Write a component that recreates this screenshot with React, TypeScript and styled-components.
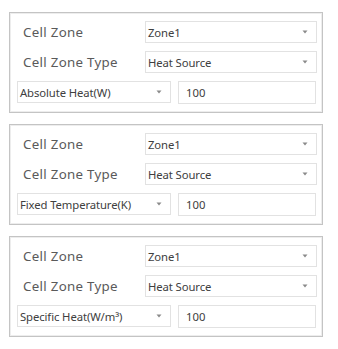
import React from "react";
import styled, { createGlobalStyle } from "styled-components";

type ZoneConfig = {
    zone: string;
    type: string;
    mode: string;
    value: string;
};

const ZONES: ZoneConfig[] = [
    { zone: "Zone1", type: "Heat Source", mode: "Absolute Heat(W)", value: "100" },
    { zone: "Zone1", type: "Heat Source", mode: "Fixed Temperature(K)", value: "100" },
    { zone: "Zone1", type: "Heat Source", mode: "Specific Heat(W/m³)", value: "100" },
];

const Caret = () => (
    <svg width="6" height="4" viewBox="0 0 6 4">
        <path d="M0.5 0.5 L5.5 0.5 L3 3.5 Z" fill="#8a8a8a" />
    </svg>
);

const Combo: React.FC<{ value: string; $width?: number }> = ({ value, $width }) => (
    <ComboBox $width={$width}>
        <ComboText>{value}</ComboText>
        <Caret />
    </ComboBox>
);

const ZonePanel: React.FC<{ config: ZoneConfig }> = ({ config }) => (
    <Panel>
        <Row>
            <Label>Cell Zone</Label>
            <Combo value={config.zone} />
        </Row>
        <Row>
            <Label>Cell Zone Type</Label>
            <Combo value={config.type} />
        </Row>
        <ValueRow>
            <Combo value={config.mode} $width={154} />
            <Input>{config.value}</Input>
        </ValueRow>
    </Panel>
);

export default function App() {
    return (
        <>
            <GlobalStyle />
            <Page>
                {ZONES.map((z, i) => (
                    <ZonePanel key={i} config={z} />
                ))}
            </Page>
        </>
    );
}

/* ------------------- styled-components ------------------- */

const GlobalStyle = createGlobalStyle`
    body {
        margin: 0;
        background: #ffffff;
        font-family: "Noto Sans", "Open Sans", sans-serif;
    }
`;

const Page = styled.div`
    display: flex;
    flex-direction: column;
    gap: 11px;
    padding: 12px 0 0 9px;
    width: 314px;
`;

const Panel = styled.div`
    border: 1px solid #c4c4c4;
    box-shadow: inset 0 0 0 1px #ededed;
    display: flex;
    flex-direction: column;
    gap: 8px;
    padding: 8px 5px 7px 6px;
    height: 101px;
    box-sizing: border-box;
`;

const Row = styled.div`
    display: flex;
    align-items: center;
    padding-left: 7px;
`;

const Label = styled.div`
    width: 122px;
    flex-shrink: 0;
    font-size: 13.3px;
    color: #5a5a5a;
    letter-spacing: 0.3px;
`;

const ComboBox = styled.div<{ $width?: number }>`
    display: flex;
    align-items: center;
    justify-content: space-between;
    box-sizing: border-box;
    height: 22px;
    flex: ${({ $width }) => ($width ? `0 0 ${$width}px` : "1")};
    border: 1px solid #e2e2e2;
    background: #ffffff;
    padding: 0 8px 0 2px;
`;

const ComboText = styled.span`
    font-size: 11.3px;
    color: #404040;
    white-space: nowrap;
    letter-spacing: -0.1px;
`;

const ValueRow = styled.div`
    display: flex;
    gap: 7px;
    padding-left: 1px;
    padding-right: 1px;
    height: 23px;
`;

const Input = styled.div`
    flex: 1;
    display: flex;
    align-items: center;
    box-sizing: border-box;
    border: 1px solid #e2e2e2;
    padding-left: 7px;
    font-size: 11.3px;
    color: #404040;
`;
